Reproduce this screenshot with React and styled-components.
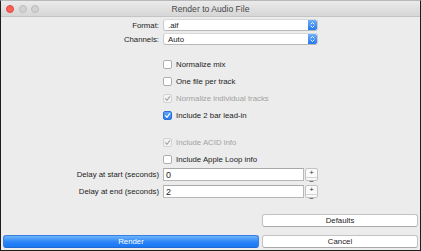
import React from "react";
import styled, { createGlobalStyle } from "styled-components";

const Global = createGlobalStyle`
  html, body { margin: 0; padding: 0; background: #ececec; }
  body { font-family: "Liberation Sans", Arial, sans-serif; }
  * { box-sizing: border-box; }
`;

const Window = styled.div`
  width: 421px;
  height: 251px;
  background: #ececec;
  border: 1px solid #1e1e1e;
  border-top-color: #b8b8b8;
  display: flex;
  flex-direction: column;
  font-size: 7.8px;
  color: #232323;
`;

const TitleBar = styled.div`
  height: 16px;
  flex: none;
  display: grid;
  grid-template-columns: 1fr auto 1fr;
  align-items: center;
  background: linear-gradient(#ebebeb, #d6d6d6);
  border-bottom: 1px solid #c4c4c4;
`;

const Lights = styled.div`
  display: flex;
  gap: 4.5px;
  padding-left: 5px;
`;

const Light = styled.span`
  width: 8px;
  height: 8px;
  border-radius: 50%;
  background: ${(p) => (p.$red ? "#fc5f57" : "#d2d2d2")};
  border: 0.5px solid ${(p) => (p.$red ? "#dd4840" : "#bcbcbc")};
`;

const Title = styled.div`
  font-size: 8.6px;
  color: #4a4a4a;
`;

const Body = styled.div`
  flex: 1;
  display: flex;
  flex-direction: column;
`;

const FormRow = styled.div`
  display: grid;
  grid-template-columns: 158px 155px;
  column-gap: 4px;
  align-items: center;
  height: ${(p) => p.$h}px;
  margin-top: ${(p) => p.$mt || 0}px;
`;

const Label = styled.div`
  text-align: right;
  white-space: nowrap;
`;

const Select = styled.div`
  grid-column: 2;
  height: 12px;
  display: flex;
  align-items: stretch;
  background: #fff;
  border: 1px solid #cbcbcb;
  border-top-color: #d8d8d8;
  border-bottom-color: #b9b9b9;
  border-radius: 3px;
  overflow: hidden;
`;

const SelectText = styled.div`
  flex: 1;
  padding-left: 4px;
  display: flex;
  align-items: center;
`;

const SelectArrows = styled.div`
  width: 9px;
  background: linear-gradient(#6fb0fb, #2677ef);
  display: flex;
  align-items: center;
  justify-content: center;
`;

const CheckRow = styled.label`
  grid-column: 2;
  display: flex;
  align-items: center;
  gap: 4px;
  color: ${(p) => (p.$disabled ? "#a2a2a2" : "#232323")};
`;

const Box = styled.span`
  width: 9px;
  height: 9px;
  border-radius: 2px;
  flex: none;
  display: flex;
  align-items: center;
  justify-content: center;
  background: ${(p) =>
    p.$checked && !p.$disabled
      ? "linear-gradient(#5ca6fa, #2a7cf2)"
      : p.$disabled
      ? "#f3f3f3"
      : "#fff"};
  border: 0.8px solid
    ${(p) =>
      p.$checked && !p.$disabled ? "#2d6fd4" : p.$disabled ? "#d3d3d3" : "#aeaeae"};
`;

const NumberField = styled.div`
  grid-column: 2;
  display: flex;
  gap: 1px;
  height: 13px;
`;

const NumInput = styled.div`
  width: 141px;
  background: #fff;
  border: 1px solid #b7b7b7;
  border-top-color: #a9a9a9;
  padding-left: 2px;
  display: flex;
  align-items: center;
  font-size: 9px;
`;

const Stepper = styled.div`
  width: 13px;
  display: flex;
  flex-direction: column;
  background: #fafafa;
  border: 1px solid #c2c2c2;
  border-radius: 2px;
`;

const StepHalf = styled.div`
  flex: 1;
  display: flex;
  align-items: center;
  justify-content: center;
  font-size: 8px;
  line-height: 1;
  color: #333;
  & + & {
    border-top: 1px solid #d4d4d4;
  }
`;

const ButtonRow = styled.div`
  display: grid;
  grid-template-columns: 256px 156px;
  column-gap: 3px;
  padding: 0 2px;
  margin-top: ${(p) => p.$mt}px;
`;

const Button = styled.div`
  grid-column: ${(p) => p.$col};
  height: 13px;
  border-radius: 3px;
  display: flex;
  align-items: center;
  justify-content: center;
  background: ${(p) =>
    p.$primary ? "linear-gradient(#6db4fb, #2a83f7 55%, #1977f3)" : "#fff"};
  color: ${(p) => (p.$primary ? "#fff" : "#222")};
  border: 0.8px solid ${(p) => (p.$primary ? "#3b7fe0" : "#c3c3c3")};
  border-bottom-color: ${(p) => (p.$primary ? "#2167d2" : "#a9a9a9")};
`;

const Check = ({ color }) => (
  <svg width="7" height="7" viewBox="0 0 10 10">
    <path d="M2 5.3 L4.2 7.6 L8.2 2.3" fill="none" stroke={color} strokeWidth="1.6" strokeLinecap="round" strokeLinejoin="round" />
  </svg>
);

const Arrows = () => (
  <svg width="5" height="8" viewBox="0 0 5 8">
    <path d="M1 3 L2.5 1.5 L4 3 M1 5 L2.5 6.5 L4 5" fill="none" stroke="#fff" strokeWidth="0.9" strokeLinecap="round" strokeLinejoin="round" />
  </svg>
);

const CheckOption = ({ label, checked, disabled, h = 17, mt = 0 }) => (
  <FormRow $h={h} $mt={mt}>
    <CheckRow $disabled={disabled}>
      <Box $checked={checked} $disabled={disabled}>
        {checked && <Check color={disabled ? "#a9a9a9" : "#fff"} />}
      </Box>
      {label}
    </CheckRow>
  </FormRow>
);

const DelayRow = ({ label, value, mt }) => (
  <FormRow $h={13} $mt={mt}>
    <Label>{label}</Label>
    <NumberField>
      <NumInput>{value}</NumInput>
      <Stepper>
        <StepHalf>+</StepHalf>
        <StepHalf>−</StepHalf>
      </Stepper>
    </NumberField>
  </FormRow>
);

export default function App() {
  return (
    <>
      <Global />
      <Window>
        <TitleBar>
          <Lights>
            <Light $red />
            <Light />
            <Light />
          </Lights>
          <Title>Render to Audio File</Title>
          <div />
        </TitleBar>
        <Body>
          <FormRow $h={12} $mt={2}>
            <Label>Format:</Label>
            <Select>
              <SelectText>.aif</SelectText>
              <SelectArrows><Arrows /></SelectArrows>
            </Select>
          </FormRow>
          <FormRow $h={12} $mt={2}>
            <Label>Channels:</Label>
            <Select>
              <SelectText>Auto</SelectText>
              <SelectArrows><Arrows /></SelectArrows>
            </Select>
          </FormRow>
          <CheckOption label="Normalize mix" mt={11} />
          <CheckOption label="One file per track" />
          <CheckOption label="Normalize individual tracks" checked disabled />
          <CheckOption label="Include 2 bar lead-in" checked />
          <CheckOption label="Include ACID info" checked disabled mt={10} />
          <CheckOption label="Include Apple Loop info" />
          <DelayRow label="Delay at start (seconds)" value="0" mt={0} />
          <DelayRow label="Delay at end (seconds)" value="2" mt={4} />
          <ButtonRow $mt={16}>
            <Button $col={2}>Defaults</Button>
          </ButtonRow>
          <ButtonRow $mt={8}>
            <Button $col={1} $primary>Render</Button>
            <Button $col={2}>Cancel</Button>
          </ButtonRow>
        </Body>
      </Window>
    </>
  );
}
